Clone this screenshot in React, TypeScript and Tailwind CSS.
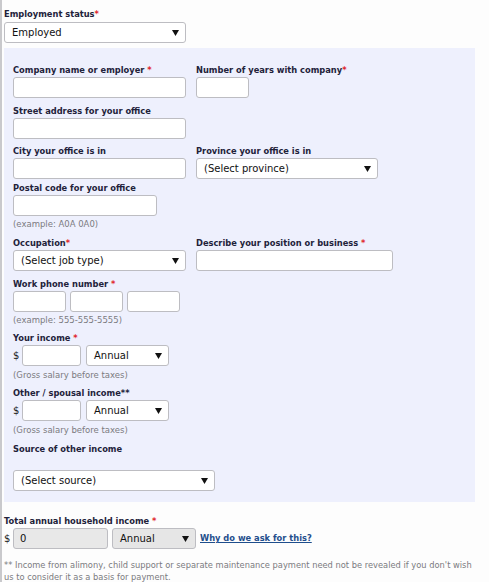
import React from "react";

const font = { fontFamily: '"DejaVu Sans", Verdana, sans-serif' };

function Req({ sep = true }: { sep?: boolean }) {
  return <span className="text-[#e0262b]">{sep ? " *" : "*"}</span>;
}

function Label({ children }: { children: React.ReactNode }) {
  return (
    <div className="h-[12px] text-[8.3px] leading-[12px] font-bold text-[#22223a] whitespace-nowrap">
      {children}
    </div>
  );
}

function Hint({ children }: { children: React.ReactNode }) {
  return <div className="h-[12px] text-[8.5px] leading-[12px] text-[#7b7b80]">{children}</div>;
}

function Input({ w, className = "" }: { w: string; className?: string }) {
  return (
    <div
      className={`h-[21px] ${w} rounded-[3px] border border-[#bdbdc2] bg-white shrink-0 ${className}`}
    />
  );
}

function Arrow() {
  return (
    <svg width="7" height="6" viewBox="0 0 7 6" className="shrink-0">
      <path d="M0 0H7L3.5 6Z" fill="#111" />
    </svg>
  );
}

function Select({
  w,
  text,
  gray = false,
}: {
  w: string;
  text: string;
  gray?: boolean;
}) {
  return (
    <div
      className={`h-[21px] ${w} pl-[7px] pr-[6px] rounded-[3px] border border-[#bdbdc2] ${
        gray ? "bg-[#e6e6e6]" : "bg-white"
      } flex items-center justify-between shrink-0 text-[10px] text-[#111]`}
    >
      <span>{text}</span>
      <Arrow />
    </div>
  );
}

export default function App() {
  return (
    <div
      style={font}
      className="w-[489px] h-[582px] bg-[#fdfdfd] border-l-2 border-[#c9c9cc] pl-[2px] pt-[8px] overflow-hidden"
    >
      <Label>
        Employment status<Req sep={false} />
      </Label>
      <div className="mt-[2px]">
        <Select w="w-[182px]" text="Employed" />
      </div>

      <div className="mt-[5px] w-[471px] bg-[#eef0fd] pl-[9px] pt-[16px] pb-[11px]">
        {/* row 1 */}
        <div className="flex gap-[10px]">
          <div className="w-[173px]">
            <Label>
              Company name or employer<Req />
            </Label>
            <div className="mt-[1px]">
              <Input w="w-[173px]" />
            </div>
          </div>
          <div>
            <Label>
              Number of years with company<Req sep={false} />
            </Label>
            <div className="mt-[1px]">
              <Input w="w-[53px]" />
            </div>
          </div>
        </div>

        <div className="mt-[7px]">
          <Label>Street address for your office</Label>
          <div className="mt-[1px]">
            <Input w="w-[173px]" />
          </div>
        </div>

        <div className="mt-[6px] flex gap-[10px]">
          <div className="w-[173px]">
            <Label>City your office is in</Label>
            <div className="mt-[1px]">
              <Input w="w-[173px]" />
            </div>
          </div>
          <div>
            <Label>Province your office is in</Label>
            <div className="mt-[1px]">
              <Select w="w-[182px]" text="(Select province)" />
            </div>
          </div>
        </div>

        <div className="mt-[3px]">
          <Label>Postal code for your office</Label>
          <div className="mt-[1px]">
            <Input w="w-[144px]" />
          </div>
          <div className="mt-[2px]">
            <Hint>(example: A0A 0A0)</Hint>
          </div>
        </div>

        <div className="mt-[7px] flex gap-[10px]">
          <div className="w-[173px]">
            <Label>
              Occupation<Req sep={false} />
            </Label>
            <div className="mt-[1px]">
              <Select w="w-[173px]" text="(Select job type)" />
            </div>
          </div>
          <div>
            <Label>
              Describe your position or business<Req />
            </Label>
            <div className="mt-[1px]">
              <Input w="w-[197px]" />
            </div>
          </div>
        </div>

        <div className="mt-[7px]">
          <Label>
            Work phone number<Req />
          </Label>
          <div className="mt-[1px] flex gap-[4px]">
            <Input w="w-[53px]" />
            <Input w="w-[53px]" />
            <Input w="w-[53px]" />
          </div>
          <div className="mt-[2px]">
            <Hint>(example: 555-555-5555)</Hint>
          </div>
        </div>

        <div className="mt-[6px]">
          <Label>
            Your income<Req />
          </Label>
          <div className="mt-[1px] flex items-center">
            <span className="w-[9px] text-[10px] text-[#222]">$</span>
            <Input w="w-[59px]" />
            <div className="ml-[5px]">
              <Select w="w-[83px]" text="Annual" />
            </div>
          </div>
          <div className="mt-[3px]">
            <Hint>(Gross salary before taxes)</Hint>
          </div>
        </div>

        <div className="mt-[6px]">
          <Label>
            Other / spousal income<span className="text-[#22223a]">**</span>
          </Label>
          <div className="mt-[1px] flex items-center">
            <span className="w-[9px] text-[10px] text-[#222]">$</span>
            <Input w="w-[59px]" />
            <div className="ml-[5px]">
              <Select w="w-[83px]" text="Annual" />
            </div>
          </div>
          <div className="mt-[3px]">
            <Hint>(Gross salary before taxes)</Hint>
          </div>
        </div>

        <div className="mt-[7px]">
          <Label>Source of other income</Label>
          <div className="mt-[15px]">
            <Select w="w-[202px]" text="(Select source)" />
          </div>
        </div>
      </div>

      <div className="mt-[13px]">
        <Label>
          Total annual household income<Req />
        </Label>
        <div className="mt-[1px] flex items-center">
          <span className="w-[9px] text-[10px] text-[#222]">$</span>
          <div className="h-[21px] w-[95px] rounded-[3px] border border-[#bdbdc2] bg-[#e8e8e8] pl-[6px] flex items-center text-[10px] text-[#111] shrink-0">
            0
          </div>
          <div className="ml-[4px]">
            <Select w="w-[84px]" text="Annual" gray />
          </div>
          <a
            href="#"
            className="ml-[4px] text-[8.3px] font-bold text-[#1f4e8c] underline whitespace-nowrap"
          >
            Why do we ask for this?
          </a>
        </div>
      </div>

      <div className="mt-[10px] w-[476px] text-[8.3px] leading-[12px] text-[#7b7b80]">
        ** Income from alimony, child support or separate maintenance payment need not be
        revealed if you don't wish us to consider it as a basis for payment.
      </div>
    </div>
  );
}
